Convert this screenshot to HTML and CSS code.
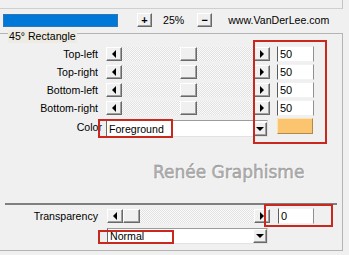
FILE: index.html
```html
<!doctype html>
<html lang="en">
<head>
  <meta charset="utf-8" />
  <title>45° Rectangle</title>
  <link rel="stylesheet" href="styles.css">
</head>
<body>

<div class="topframe"></div>

<div class="toolbar">
  <div class="progress"></div>
  <span class="btn plus">+</span>
  <span class="zoom">25%</span>
  <span class="btn minus">−</span>
  <span class="url">www.VanDerLee.com</span>
</div>

<div class="group">
  <div class="legend">45° Rectangle</div>

  <div class="rows">
    <div class="row">
      <span class="label">Top-left</span>
      <div class="slider">
        <span class="arrow left"></span>
        <div class="track"><span class="thumb" style="margin-left:58px"></span></div>
        <span class="arrow right"></span>
      </div>
      <span class="edit">50</span>
    </div>
    <div class="row">
      <span class="label">Top-right</span>
      <div class="slider">
        <span class="arrow left"></span>
        <div class="track"><span class="thumb" style="margin-left:58px"></span></div>
        <span class="arrow right"></span>
      </div>
      <span class="edit">50</span>
    </div>
    <div class="row">
      <span class="label">Bottom-left</span>
      <div class="slider">
        <span class="arrow left"></span>
        <div class="track"><span class="thumb" style="margin-left:58px"></span></div>
        <span class="arrow right"></span>
      </div>
      <span class="edit">50</span>
    </div>
    <div class="row">
      <span class="label">Bottom-right</span>
      <div class="slider">
        <span class="arrow left"></span>
        <div class="track"><span class="thumb" style="margin-left:58px"></span></div>
        <span class="arrow right"></span>
      </div>
      <span class="edit">50</span>
    </div>

    <div class="row color-row">
      <span class="label color-label">Color</span>
      <div class="combo fg"><span>Foreground</span><span class="drop"></span></div>
      <span class="swatch"></span>
    </div>
  </div>

  <div class="watermark">Renée Graphisme</div>

  <div class="separator"></div>

  <div class="row trans-row">
    <span class="label">Transparency</span>
    <div class="slider trans">
      <span class="arrow left"></span>
      <div class="track"><span class="thumb" style="margin-left:0px"></span></div>
      <span class="arrow right"></span>
    </div>
    <span class="edit trans-edit">0</span>
  </div>

  <div class="combo blend"><span>Normal</span><span class="drop"></span></div>
</div>

<!-- red annotation boxes -->
<div class="mark m1"></div>
<div class="mark m2"></div>
<div class="mark m3"></div>
<div class="mark m4"></div>

</body>
</html>
```

FILE: styles.css
```css
*{box-sizing:border-box;}
body{margin:0;width:349px;height:255px;overflow:hidden;position:relative;background:#f0f0f0;color:#000;font-family:"Liberation Sans", Arial, sans-serif;font-size:10.6px;}

.topframe{height:9px;width:343px;border-right:1px solid #c4c4c4;border-bottom:1px solid #cfcfcf;}

.toolbar{display:flex;align-items:center;height:14px;margin-top:4px;padding-left:3px;}
.progress{width:115px;height:13px;background:#0078d7;border:1px solid #2f77b5;}
.btn{display:flex;align-items:center;justify-content:center;width:15px;height:14px;background:#f0f0f0;border:1px solid;border-color:#fff #696969 #696969 #fff;box-shadow:inset -1px -1px 0 #a0a0a0;font-weight:bold;font-size:11px;line-height:1;}
.plus{margin-left:19px;}
.zoom{margin-left:11px;}
.minus{margin-left:13px;}
.url{margin-left:16px;}

.group{margin:6px 0 0 -1px;width:344px;height:218px;border:1px solid #b4b4b4;}
.legend{width:fit-content;height:13px;line-height:13px;margin:-4px 0 0 8px;padding:0 1px;background:#eeebe3;}

.rows{margin-top:2px;}
.row{display:flex;align-items:center;height:17px;margin-bottom:1px;}
.label{flex:none;width:98px;text-align:right;}

.slider{display:flex;flex:none;width:164px;height:14px;margin-left:8px;}
.arrow{flex:none;display:flex;align-items:center;justify-content:center;width:16px;height:14px;background:#f0f0f0;border:1px solid;border-color:#fff #696969 #696969 #fff;box-shadow:inset -1px -1px 0 #a0a0a0;}
.arrow.left::before{content:"";border-right:4px solid #000;border-top:4px solid transparent;border-bottom:4px solid transparent;}
.arrow.right::before{content:"";border-left:4px solid #000;border-top:4px solid transparent;border-bottom:4px solid transparent;}
.track{flex:1;display:flex;background:repeating-conic-gradient(#fafafa 0 25%, #e2e2e2 0 50%) 0 0/2px 2px;}
.thumb{flex:none;width:17px;height:14px;background:#f0f0f0;border:1px solid;border-color:#fff #696969 #696969 #fff;box-shadow:inset -1px -1px 0 #a0a0a0;}

.edit{flex:none;width:37px;height:16px;margin-left:7px;padding-left:2px;background:#fff;border:1px solid #f2f2f2;border-left-color:#5c5c5c;border-right-color:#909090;font-size:11px;line-height:14px;}

.color-row{height:20px;align-items:flex-start;}
.color-label{width:102px;align-self:center;}
.combo{display:flex;align-items:center;padding-left:2px;background:#fff;border:1px solid #e2e2e2;border-left-color:#6a6a6a;border-top-color:#9c9c9c;}
.combo .drop{margin-left:auto;display:flex;align-items:center;justify-content:center;width:14px;height:14px;background:#f0f0f0;border:1px solid;border-color:#fff #696969 #696969 #fff;box-shadow:inset -1px -1px 0 #a0a0a0;}
.combo .drop::before{content:"";border-top:4px solid #000;border-left:4px solid transparent;border-right:4px solid transparent;}
.fg{width:162px;height:17px;margin:3px 0 0 4px;}
.swatch{flex:none;width:36px;height:16px;margin:1px 0 0 9px;background:#fbc46e;border:1px solid;border-color:#fde2b6 #b08850 #b08850 #fde2b6;}

.watermark{height:22px;line-height:22px;margin-top:24px;padding-left:153px;font-family:"DejaVu Sans", Verdana, sans-serif;font-size:17px;color:#b2b2b2;text-shadow:1px 1px 0 #fff;-webkit-text-stroke:0.4px #8c8c8c;}

.separator{width:332px;height:2px;margin:20px 0 0 5px;background:#7f7f7f;}

.trans-row{margin-top:2px;}
.trans{width:163px;margin-left:9px;}
.trans-edit{width:36px;margin-left:8px;}
.blend{width:161px;height:16px;margin:4px 0 0 107px;}

.mark{position:absolute;border:2px solid #c8281e;}
.m1{left:253px;top:40px;width:74px;height:104px;}
.m2{left:98px;top:119px;width:75px;height:19px;}
.m3{left:264px;top:204px;width:69px;height:23px;}
.m4{left:98px;top:230px;width:76px;height:14px;}
```
